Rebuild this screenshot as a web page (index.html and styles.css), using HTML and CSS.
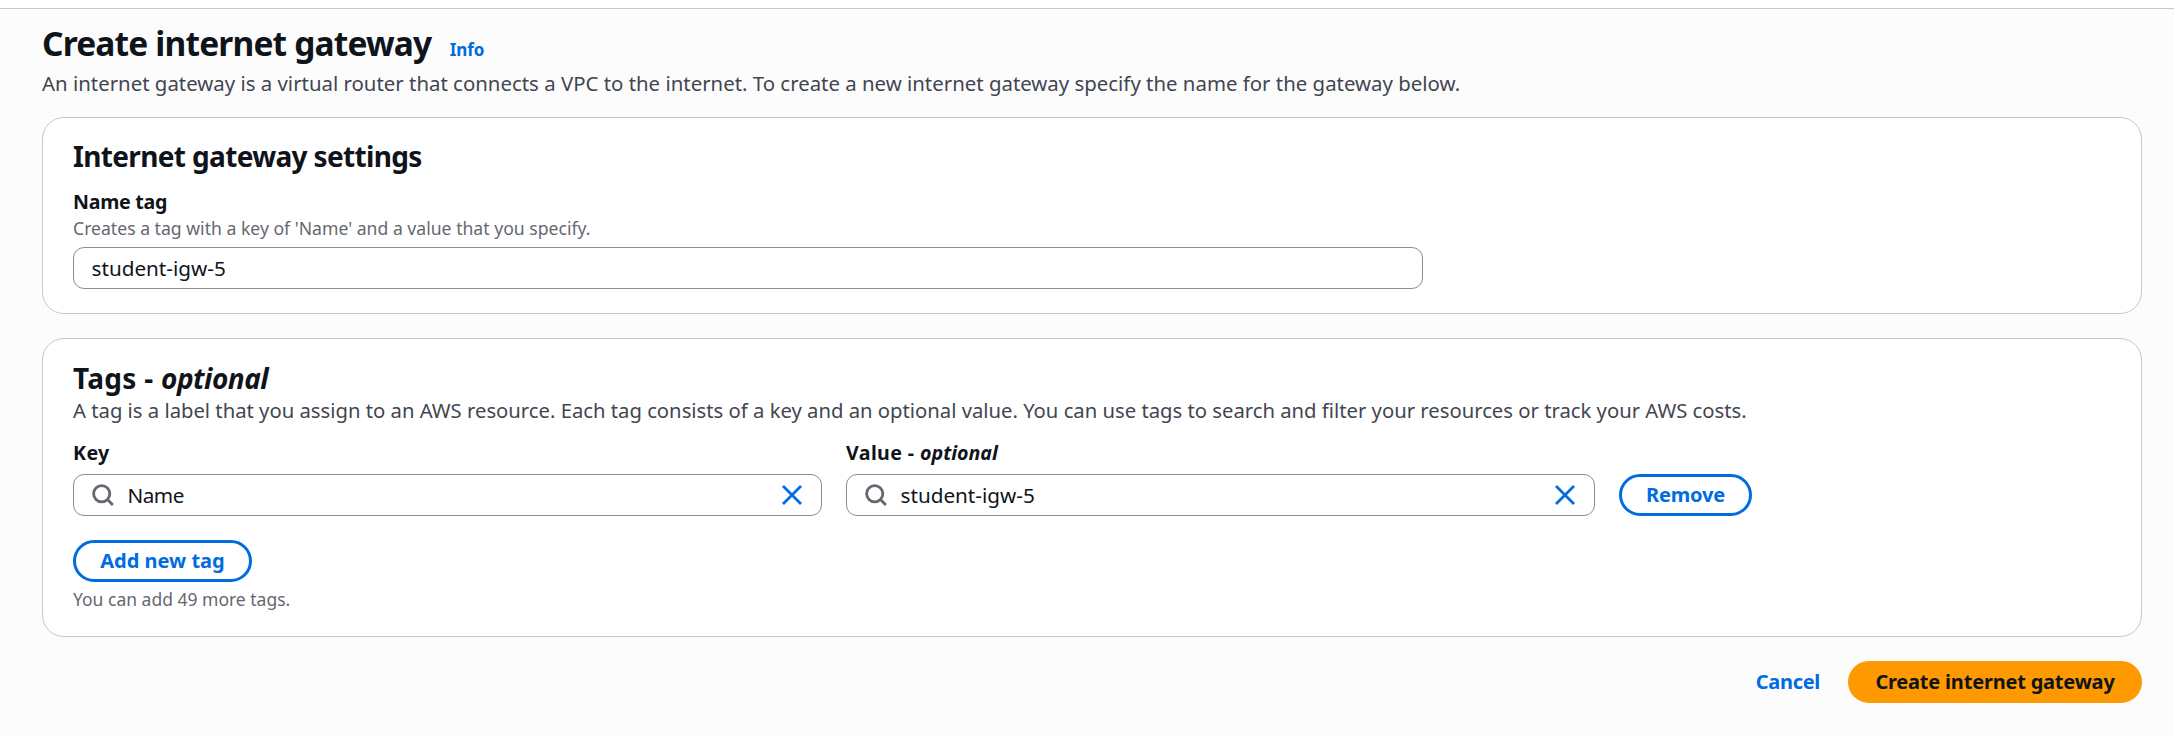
FILE: index.html
```
<!DOCTYPE html>
<html lang="en">
<head>
<meta charset="utf-8">
<title>Create internet gateway</title>
<link rel="stylesheet" href="styles.css">
</head>
<body>
<main class="page">
  <header class="page-header">
    <div class="title-row">
      <h1 class="title">Create internet gateway</h1>
      <a class="info">Info</a>
    </div>
    <p class="description">An internet gateway is a virtual router that connects a VPC to the internet. To create a new internet gateway specify the name for the gateway below.</p>
  </header>

  <section class="card settings">
    <h2 class="heading">Internet gateway settings</h2>
    <div class="label">Name tag</div>
    <div class="hint">Creates a tag with a key of 'Name' and a value that you specify.</div>
    <div class="input name-input"><span class="value">student-igw-5</span></div>
  </section>

  <section class="card tags">
    <h2 class="heading">Tags - <em class="optional">optional</em></h2>
    <p class="description tags-description">A tag is a label that you assign to an AWS resource. Each tag consists of a key and an optional value. You can use tags to search and filter your resources or track your AWS costs.</p>
    <div class="tag-row">
      <div class="field">
        <div class="label">Key</div>
        <div class="input">
          <svg class="search" viewBox="0 0 22 22"><circle cx="9.7" cy="9.7" r="8.1"/><path d="M15.2 15.2 20.9 20.9"/></svg>
          <span class="value name-value">Name</span>
          <svg class="clear" viewBox="0 0 20 20"><path d="M1 1 19 19M19 1 1 19"/></svg>
        </div>
      </div>
      <div class="field">
        <div class="label">Value - <em class="optional">optional</em></div>
        <div class="input">
          <svg class="search" viewBox="0 0 22 22"><circle cx="9.7" cy="9.7" r="8.1"/><path d="M15.2 15.2 20.9 20.9"/></svg>
          <span class="value">student-igw-5</span>
          <svg class="clear" viewBox="0 0 20 20"><path d="M1 1 19 19M19 1 1 19"/></svg>
        </div>
      </div>
      <button class="button remove">Remove</button>
    </div>
    <button class="button add">Add new tag</button>
    <div class="hint tag-limit">You can add 49 more tags.</div>
  </section>

  <footer class="actions">
    <button class="button link">Cancel</button>
    <button class="button primary">Create internet gateway</button>
  </footer>
</main>
</body>
</html>
```
FILE: styles.css
```
* { box-sizing: border-box; }
body {
  margin: 0;
  height: 737px;
  overflow: hidden;
  padding-top: 8px;
  background: #fff;
  color: #0f141a;
  font-family: "Noto Sans", "Open Sans", sans-serif;
}
h1, h2, p { margin: 0; }
.page {
  height: 729px;
  border-top: 1px solid #c6c6cd;
  background: #fcfcfd;
  padding: 14px 32px 0 42px;
}
.title-row { display: flex; align-items: baseline; gap: 18.5px; height: 40px; }
.title { font-size: 33.5px; line-height: 40px; font-weight: 700; letter-spacing: -0.83px; }
.info { font-size: 17px; font-weight: 700; letter-spacing: -0.1px; color: #006ce0; }
.description { font-size: 20.4px; line-height: 26px; color: #424650; white-space: nowrap; }
.page-header .description { margin-top: 7px; }
.card {
  border: 1px solid #c6c6cd;
  border-radius: 22px;
  background: #fff;
  padding: 21px 30px 0;
}
.settings { height: 197px; margin-top: 21px; }
.tags { height: 299px; margin-top: 24px; padding-top: 22px; }
.heading { font-size: 28px; line-height: 34px; font-weight: 700; letter-spacing: -0.65px; }
.tags .heading { letter-spacing: 0.3px; }
.heading .optional { letter-spacing: -0.5px; }
.optional { font-style: italic; }
.tags-description { margin-top: 2px; font-size: 20.25px; }
.label { font-size: 19.6px; line-height: 26px; font-weight: 700; letter-spacing: -0.25px; }
.settings .label { margin-top: 16px; }
.tags .label { letter-spacing: 0.4px; }
.label .optional { letter-spacing: 0; }
.hint { font-size: 17.61px; line-height: 22px; color: #656871; }
.settings .hint { margin-top: 2px; }
.input {
  display: flex;
  align-items: center;
  height: 42px;
  padding: 0 18px 0 17.5px;
  border: 1px solid #8c8c94;
  border-radius: 11px;
  background: #fff;
}
.name-input { width: 1350px; margin-top: 8px; }
.value { flex: 1; font-size: 20.7px; line-height: 28px; }
.name-value { letter-spacing: -0.5px; }
.search { width: 22px; height: 22px; margin-right: 14px; fill: none; stroke: #656871; stroke-width: 2.8; }
.clear { width: 20px; height: 20px; margin-right: 1px; fill: none; stroke: #006ce0; stroke-width: 2.8; }
.tag-row { display: flex; align-items: flex-end; gap: 24px; margin-top: 17px; }
.field { width: 749px; }
.field .input { margin-top: 8px; }
.button {
  height: 42px;
  padding: 0;
  border: 3px solid #006ce0;
  border-radius: 21px;
  background: #fff;
  color: #006ce0;
  font: 700 20px/28px "Noto Sans", "Open Sans", sans-serif;
  letter-spacing: -0.2px;
}
.remove { width: 133px; }
.add { display: block; width: 179px; margin-top: 24px; letter-spacing: 0; }
.tag-limit { margin-top: 6px; font-size: 17.5px; }
.actions { display: flex; justify-content: flex-end; gap: 28px; margin-top: 24px; }
.link { border-width: 0; background: none; letter-spacing: -0.3px; }
.primary { width: 294px; border-color: #ff9900; background: #ff9900; color: #0f141a; }
```
